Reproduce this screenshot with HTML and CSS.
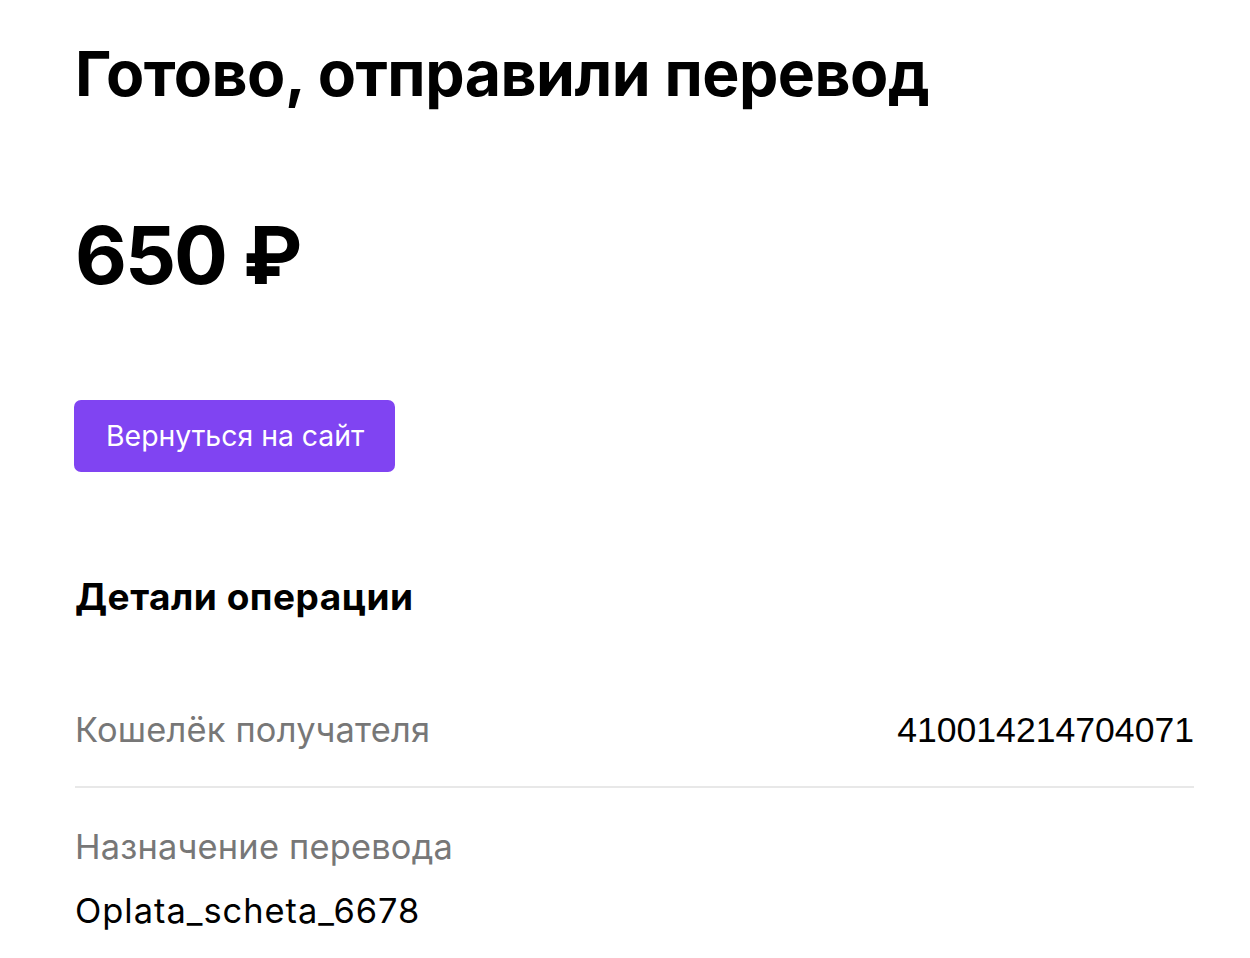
FILE: index.html
```html
<!DOCTYPE html>
<html lang="ru">
<head>
    <meta charset="UTF-8">
    <meta name="viewport" content="width=device-width, initial-scale=1.0">
    <title>Перевод отправлен</title>
    <link rel="stylesheet" href="styles.css">
</head>
<body>

    <div class="page">
        <h1 class="title">Готово, отправили перевод</h1>

        <div class="amount">650 ₽</div>

        <a class="back-btn" href="#">Вернуться на сайт</a>

        <h2 class="details-title">Детали операции</h2>

        <div class="row row-split">
            <span class="label">Кошелёк получателя</span>
            <span class="wallet">410014214704071</span>
        </div>

        <div class="row">
            <div class="label">Назначение перевода</div>
            <div class="value">Oplata_scheta_6678</div>
        </div>
    </div>

</body>
</html>
```

FILE: styles.css
```css
body {
    margin: 0;
    background: #fff;
    color: #000;
    font-family: Inter, "Noto Sans", sans-serif;
}
.page {
    padding: 33px 56px 0 75px;
}
.title {
    margin: 0;
    font-size: 62.5px;
    font-weight: 700;
    line-height: 80px;
    letter-spacing: -0.5px;
}
.amount {
    margin-top: 92px;
    font-size: 80px;
    font-weight: 700;
    line-height: 100px;
    letter-spacing: -2px;
}
.back-btn {
    display: inline-block;
    margin-top: 95px;
    margin-left: -1px;
    padding: 0 31px 0 32px;
    height: 72px;
    line-height: 72px;
    background: #8044f2;
    color: #fff;
    border-radius: 7px;
    font-size: 28.4px;
    text-decoration: none;
}
.details-title {
    margin: 100px 0 0;
    font-size: 37px;
    font-weight: 700;
    line-height: 50px;
    letter-spacing: 0.5px;
}
.row {
    margin-top: 86px;
}
.row-split {
    display: flex;
    justify-content: space-between;
    align-items: center;
    padding-bottom: 34px;
    border-bottom: 2px solid #e8e8e8;
}
.row-split + .row {
    margin-top: 37px;
}
.label {
    color: #777;
    font-size: 34.4px;
    line-height: 44px;
    letter-spacing: 0.2px;
}
.wallet {
    font-family: "Liberation Sans", Arial, sans-serif;
    font-size: 35.6px;
    line-height: 44px;
}
.value {
    margin-top: 20px;
    font-size: 34.4px;
    line-height: 44px;
    letter-spacing: 1px;
}
```
